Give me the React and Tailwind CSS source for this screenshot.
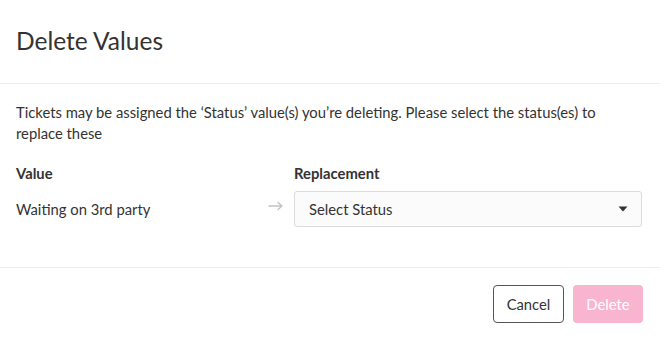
import React from "react";

const ArrowRight = () => (
  <svg width="16" height="10" viewBox="0 0 16 10" fill="none" stroke="#c4c4c4" strokeWidth="1.4" strokeLinecap="round" strokeLinejoin="round">
    <path d="M1 5h13M10 1.5L14 5l-4 3.5" />
  </svg>
);

const Caret = () => (
  <svg width="10" height="6" viewBox="0 0 10 6">
    <path d="M0.5 0.5h9L5 5.5z" fill="#333" />
  </svg>
);

export default function App() {
  return (
    <div className="w-[660px] h-[338px] bg-white text-[#333] font-['Lato',sans-serif] flex flex-col">
      <div className="h-[84px] px-4 flex items-center border-b border-[#ededed]">
        <h1 className="text-[24.5px] leading-none font-normal text-[#333]">Delete Values</h1>
      </div>

      <div className="px-4 pt-[18px] pb-[40px] border-b border-[#ededed]">
        <p className="text-[14.8px] leading-[21px]">
          Tickets may be assigned the ‘Status’ value(s) you’re deleting. Please select the status(es) to replace these
        </p>

        <div className="mt-[19px] grid grid-cols-[252px_26px_1fr] gap-y-[8px] items-center">
          <div className="text-[14.8px] font-bold leading-[20px]">Value</div>
          <div />
          <div className="text-[14.8px] font-bold leading-[20px]">Replacement</div>

          <div className="text-[14.8px] leading-[20px]">Waiting on 3rd party</div>
          <div className="flex justify-start pb-[6px]">
            <ArrowRight />
          </div>
          <div className="h-[36px] mr-[2px] rounded-[3px] border border-[#dcdcdc] bg-[#fbfbfb] flex items-center justify-between pl-[14px] pr-[13px]">
            <span className="text-[14.8px]">Select Status</span>
            <Caret />
          </div>
        </div>
      </div>

      <div className="flex justify-end gap-[9px] pt-[17px] pr-[17px]">
        <button className="h-[38px] w-[71px] rounded-[4px] border border-[#555] text-[14.8px] text-[#333] bg-white">
          Cancel
        </button>
        <button className="h-[38px] w-[70px] rounded-[4px] bg-[#f9b4cf] text-[14.8px] text-white">
          Delete
        </button>
      </div>
    </div>
  );
}
